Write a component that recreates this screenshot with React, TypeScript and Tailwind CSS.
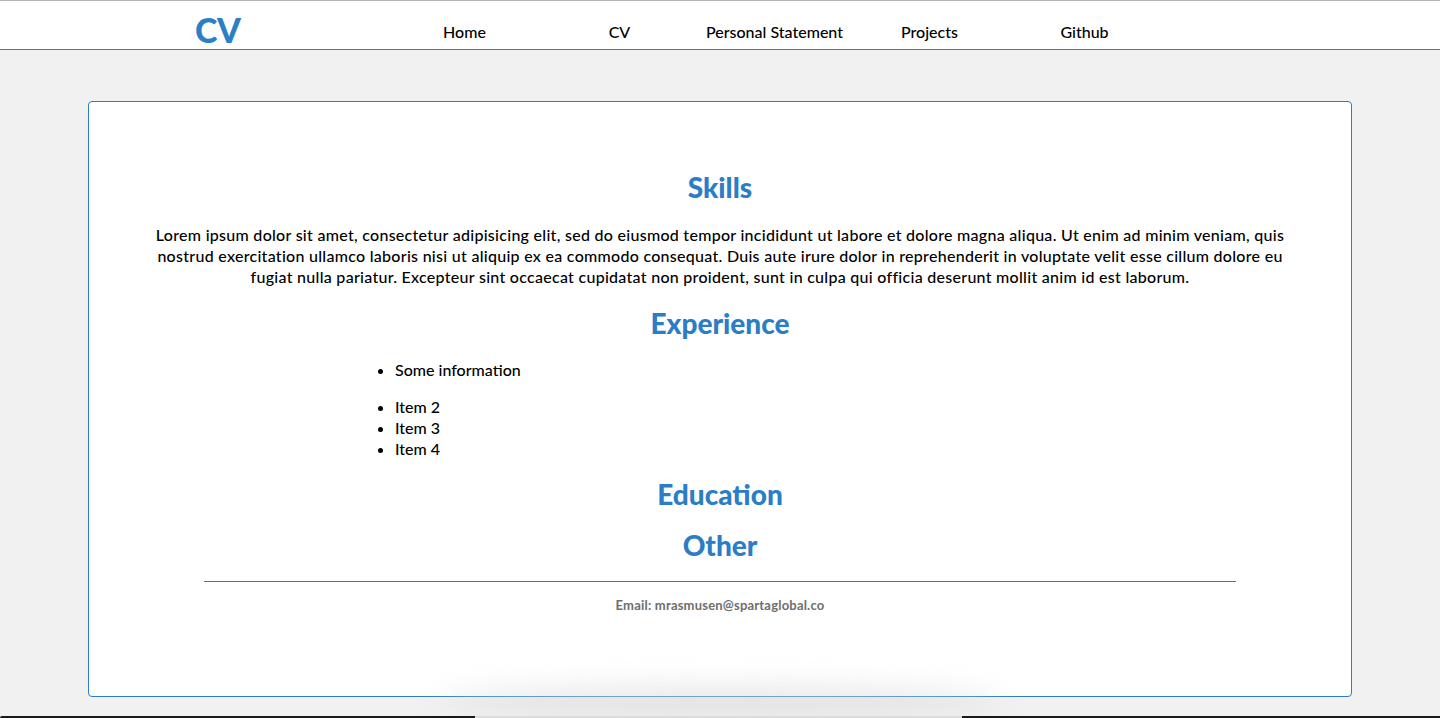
const navItems = ["Home", "CV", "Personal Statement", "Projects", "Github"];

const list = ["Item 2", "Item 3", "Item 4"];

const font = "font-['Futura','Century_Gothic',Lato,sans-serif]";

export default function App() {
  return (
    <div className={`relative h-[718px] overflow-hidden bg-[#f1f1f1] ${font}`}>
      <header className="flex h-[50px] border-t border-b border-t-[#b5b5b5] border-b-[#2a7fc8] bg-white">
        <div className="flex w-[387px] pl-[195px] pt-[12px]">
          <span className="text-[34px] font-black leading-none tracking-[-0.5px] text-[#2a7fc6]">CV</span>
        </div>
        <nav className="flex pt-[21px]">
          {navItems.map((item) => (
            <a
              key={item}
              className="w-[155px] text-center text-[16px] font-medium leading-[20px] text-black"
              href="#"
            >
              {item}
            </a>
          ))}
        </nav>
      </header>

      <main className="px-[88px] pt-[51px]">
        <section className="flex h-[596px] flex-col items-center rounded-[4px] border border-[#2a7dc6] bg-white px-[60px] pt-[69px]">
          <h2 className="text-[28px] font-black leading-[32px] text-[#2a7dc6]">Skills</h2>
          <p className="mt-[21px] text-center text-[16px] font-medium leading-[21px] tracking-[0.28px] text-black">
            Lorem ipsum dolor sit amet, consectetur adipisicing elit, sed do eiusmod tempor incididunt ut labore et
            dolore magna aliqua. Ut enim ad minim veniam, quis nostrud exercitation ullamco laboris nisi ut aliquip ex ea
            commodo consequat. Duis aute irure dolor in reprehenderit in voluptate velit esse cillum dolore eu fugiat
            nulla pariatur. Excepteur sint occaecat cupidatat non proident, sunt in culpa qui officia deserunt mollit
            anim id est laborum.
          </p>

          <h2 className="mt-[20px] text-[28px] font-black leading-[32px] text-[#2a7dc6]">Experience</h2>
          <div className="mt-[20px] w-full pl-[206px] text-[16px] font-medium leading-[21px] text-black">
            <ul className="list-disc pl-[40px]">
              <li>Some information</li>
            </ul>
            <ul className="mt-[16px] list-disc pl-[40px]">
              {list.map((l) => (
                <li key={l}>{l}</li>
              ))}
            </ul>
          </div>

          <h2 className="mt-[19px] text-[28px] font-black leading-[32px] text-[#2a7dc6]">Education</h2>
          <h2 className="mt-[19px] text-[28px] font-black leading-[32px] text-[#2a7dc6]">Other</h2>

          <div className="mt-[20px] h-px w-[1032px] bg-[#2a7dc6]" />
          <p className="mt-[15px] text-[13px] font-bold leading-[16px] tracking-[0.2px] text-[#6e6e6e]">
            Email: mrasmusen@spartaglobal.co
          </p>
        </section>
      </main>

      <div className="pointer-events-none absolute bottom-[2px] left-[440px] h-[30px] w-[560px] rounded-[50%] bg-[#d8d8d8] opacity-60 blur-[14px]" />
      <div className="absolute bottom-0 left-0 flex h-[2px] w-full rounded-tl-[3px] bg-[#1a1a1a]">
        <div className="ml-[475px] h-full w-[487px] bg-[#dcdcdc]" />
      </div>
    </div>
  );
}
